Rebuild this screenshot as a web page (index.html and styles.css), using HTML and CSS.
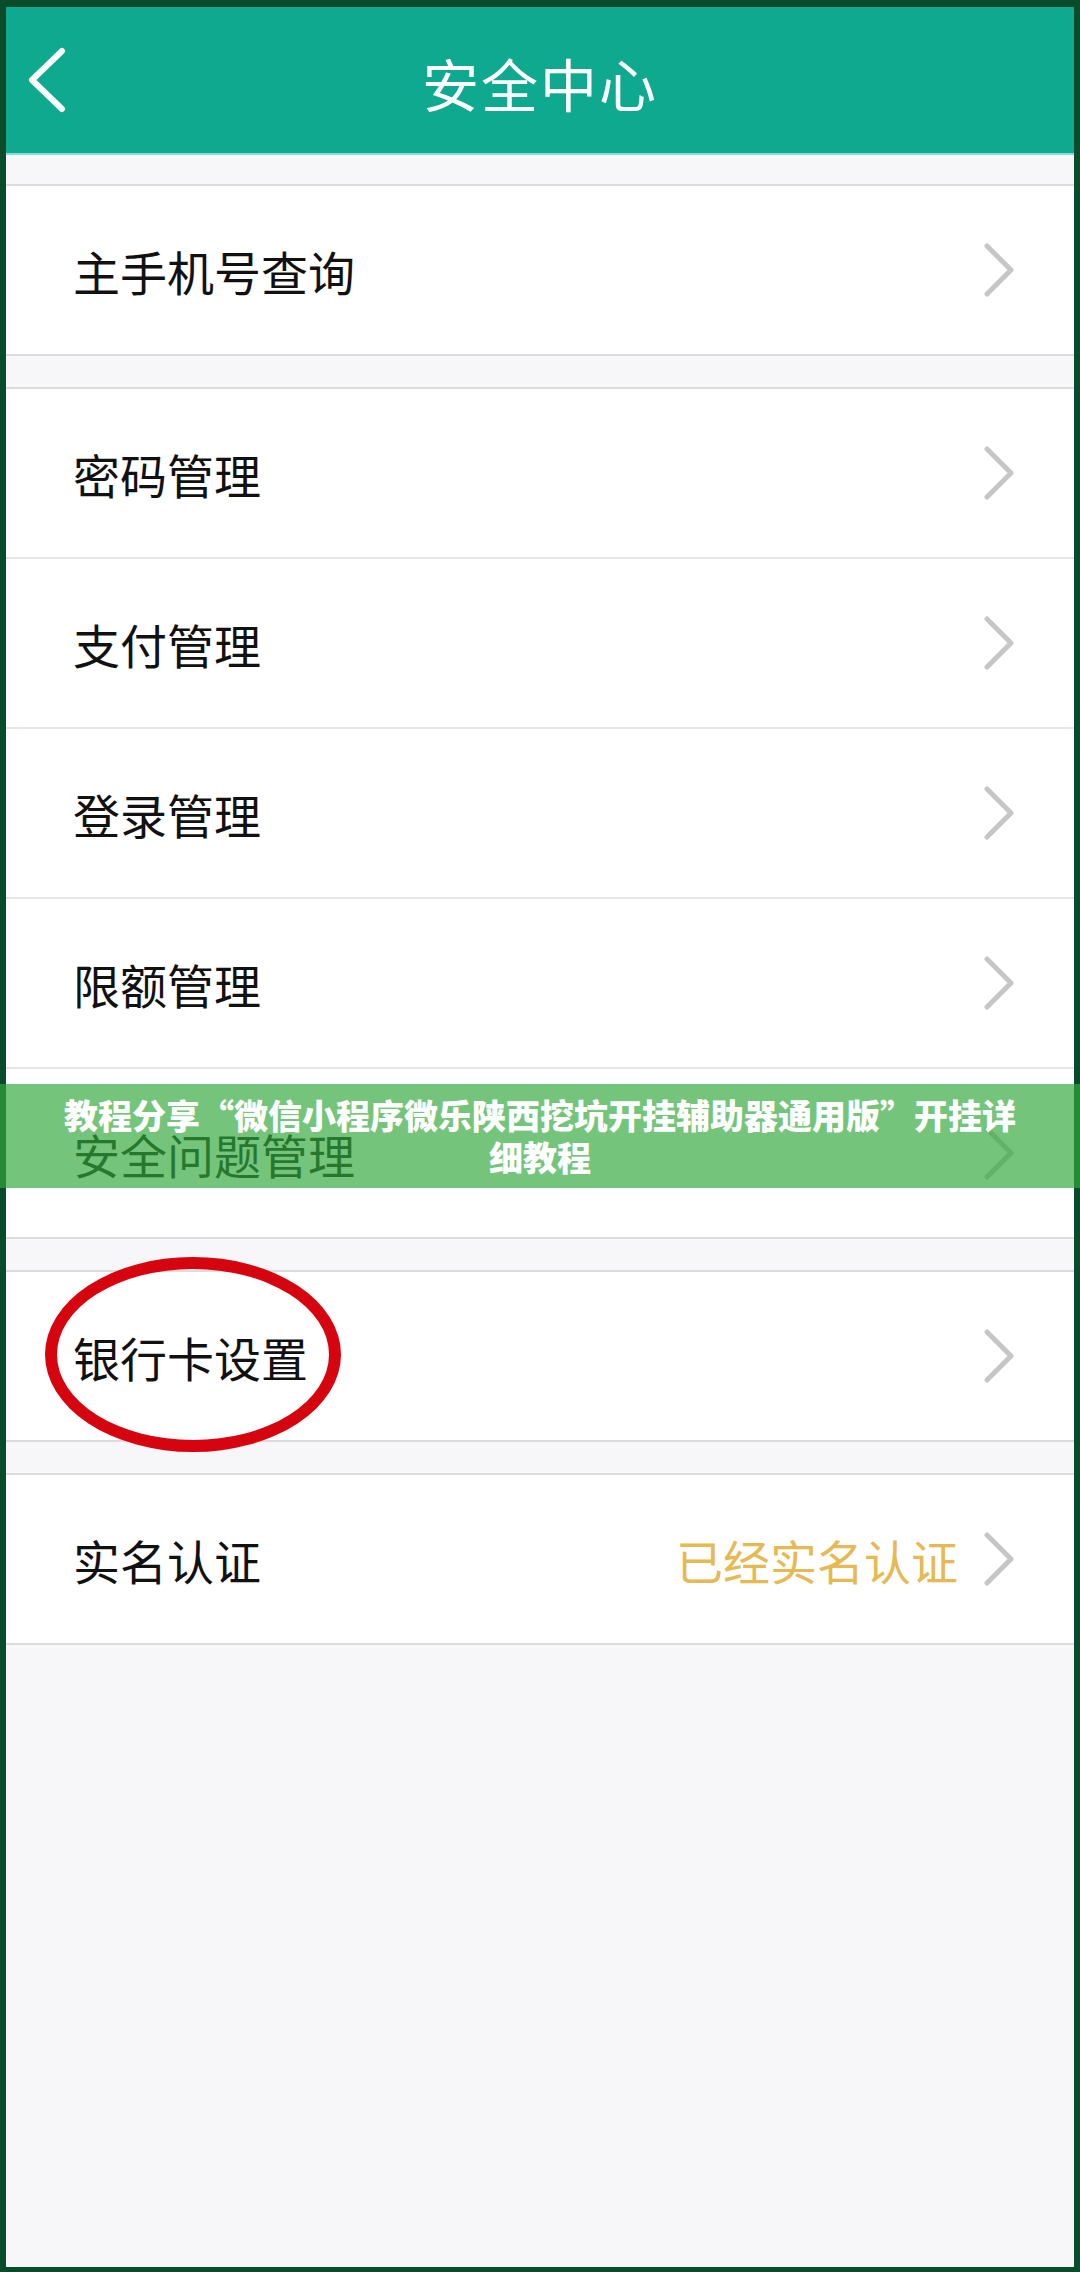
FILE: index.html
```html
<!DOCTYPE html>
<html lang="zh-CN">
<head>
<meta charset="utf-8">
<title>安全中心</title>
<link rel="stylesheet" href="styles.css">
</head>
<body>
<div class="screen">
  <header class="topbar">
    <div class="back">
      <svg width="44" height="66" viewBox="0 0 44 66"><polyline points="36,4 6,33 36,62" fill="none" stroke="#ffffff" stroke-width="6" stroke-linecap="round" stroke-linejoin="round"/></svg>
    </div>
    <h1 class="title">安全中心</h1>
    <div class="spacer"></div>
  </header>

  <section class="group">
    <div class="row"><span class="label">主手机号查询</span><svg class="chev" width="30" height="54" viewBox="0 0 30 54"><polyline points="3,3 27,27 3,51" fill="none" stroke="#c6c6c8" stroke-width="5" stroke-linecap="round" stroke-linejoin="round"/></svg></div>
  </section>

  <section class="group">
    <div class="row"><span class="label">密码管理</span><svg class="chev" width="30" height="54" viewBox="0 0 30 54"><polyline points="3,3 27,27 3,51" fill="none" stroke="#c6c6c8" stroke-width="5" stroke-linecap="round" stroke-linejoin="round"/></svg></div>
    <div class="row"><span class="label">支付管理</span><svg class="chev" width="30" height="54" viewBox="0 0 30 54"><polyline points="3,3 27,27 3,51" fill="none" stroke="#c6c6c8" stroke-width="5" stroke-linecap="round" stroke-linejoin="round"/></svg></div>
    <div class="row"><span class="label">登录管理</span><svg class="chev" width="30" height="54" viewBox="0 0 30 54"><polyline points="3,3 27,27 3,51" fill="none" stroke="#c6c6c8" stroke-width="5" stroke-linecap="round" stroke-linejoin="round"/></svg></div>
    <div class="row"><span class="label">限额管理</span><svg class="chev" width="30" height="54" viewBox="0 0 30 54"><polyline points="3,3 27,27 3,51" fill="none" stroke="#c6c6c8" stroke-width="5" stroke-linecap="round" stroke-linejoin="round"/></svg></div>
    <div class="row"><span class="label">安全问题管理</span><svg class="chev" width="30" height="54" viewBox="0 0 30 54"><polyline points="3,3 27,27 3,51" fill="none" stroke="#c6c6c8" stroke-width="5" stroke-linecap="round" stroke-linejoin="round"/></svg></div>
  </section>

  <section class="group marked">
    <div class="row"><span class="label">银行卡设置</span><svg class="chev" width="30" height="54" viewBox="0 0 30 54"><polyline points="3,3 27,27 3,51" fill="none" stroke="#c6c6c8" stroke-width="5" stroke-linecap="round" stroke-linejoin="round"/></svg></div>
    <div class="ring"></div>
  </section>

  <section class="group">
    <div class="row"><span class="label">实名认证</span><span class="value">已经实名认证</span><svg class="chev" width="30" height="54" viewBox="0 0 30 54"><polyline points="3,3 27,27 3,51" fill="none" stroke="#c6c6c8" stroke-width="5" stroke-linecap="round" stroke-linejoin="round"/></svg></div>
  </section>
</div>

<div class="banner"><p class="banner-text">教程分享“微信小程序微乐陕西挖坑开挂辅助器通用版”开挂详细教程</p></div>
</body>
</html>
```

FILE: styles.css
```css
html, body {
  margin: 0;
  padding: 0;
}
body {
  position: relative;
  background: #0a4b2b;
  padding: 7px 6px 5px;
  font-family: "Noto Sans CJK SC", "Noto Sans", sans-serif;
}
.screen {
  position: relative;
  height: 2260px;
  background: #f7f7f9;
  overflow: hidden;
}
.topbar {
  height: 146px;
  background: #0fa98f;
  border-bottom: 2px solid #86ddd4;
  display: grid;
  grid-template-columns: 1fr auto 1fr;
  align-items: center;
}
.back {
  display: flex;
  align-items: center;
  padding-left: 20px;
}
.back svg { display: block; }
.title {
  margin: 0;
  padding-top: 4px;
  color: #ffffff;
  font-size: 57px;
  font-weight: 400;
  letter-spacing: 2px;
  line-height: 1;
}
.group {
  position: relative;
  background: #ffffff;
  border-top: 2px solid #dcdcde;
  border-bottom: 2px solid #dcdcde;
  margin-top: 31px;
}
.topbar + .group { margin-top: 29px; }
.row {
  height: 168px;
  display: flex;
  align-items: center;
  padding: 0 60px 0 67px;
}
.row + .row { border-top: 2px solid #e6e6e8; }
.label {
  flex: 1;
  font-size: 47px;
  color: #111111;
}
.value {
  font-size: 47px;
  color: #e6b953;
  margin-right: 26px;
}
.chev { display: block; flex: none; }
.ring {
  position: absolute;
  left: 39px;
  top: -15px;
  width: 296px;
  height: 195px;
  box-sizing: border-box;
  border: 12px solid #d6040e;
  border-radius: 50%;
}
.banner {
  position: absolute;
  left: 0;
  right: 0;
  top: 1084px;
  height: 104px;
  background: rgba(50, 170, 60, 0.68);
  display: flex;
  align-items: center;
  justify-content: center;
}
.banner-text {
  margin: 0;
  width: 960px;
  text-align: center;
  color: #ffffff;
  font-size: 34px;
  font-weight: 900;
  line-height: 42px;
}
```
